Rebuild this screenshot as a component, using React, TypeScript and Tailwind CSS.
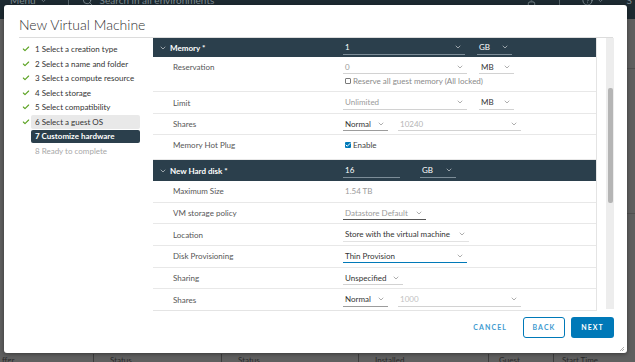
import React from "react";
import { Check, ChevronDown, Search, HelpCircle, User } from "lucide-react";

const steps = [
  { label: "1 Select a creation type", state: "done" },
  { label: "2 Select a name and folder", state: "done" },
  { label: "3 Select a compute resource", state: "done" },
  { label: "4 Select storage", state: "done" },
  { label: "5 Select compatibility", state: "done" },
  { label: "6 Select a guest OS", state: "prev" },
  { label: "7 Customize hardware", state: "active" },
  { label: "8 Ready to complete", state: "todo" },
];

function Select({
  value,
  w,
  text = "text-[#333]",
  line = "border-[#d2d2d2]",
  chev = "text-[#666]",
}: {
  value: string;
  w: string;
  text?: string;
  line?: string;
  chev?: string;
}) {
  return (
    <div className={`flex h-[14px] shrink-0 items-center justify-between border-b pl-[2px] pr-[3px] ${w} ${line}`}>
      <span className={`whitespace-nowrap ${text}`}>{value}</span>
      <ChevronDown size={8} strokeWidth={1.6} className={chev} />
    </div>
  );
}

function Row({ label, h, top = false, children }: { label: string; h: string; top?: boolean; children?: React.ReactNode }) {
  return (
    <div className={`flex shrink-0 border-b border-[#e8e8e8] ${h} ${top ? "items-start pt-[3px]" : "items-center"}`}>
      <div className="flex h-[14px] w-[190px] shrink-0 items-center pl-[20px] text-[#565656]">{label}</div>
      {children}
    </div>
  );
}

function Box({ checked = false }: { checked?: boolean }) {
  return checked ? (
    <span className="flex h-[6px] w-[6px] items-center justify-center rounded-[1px] bg-[#0079b8]">
      <Check size={6} strokeWidth={4} className="text-white" />
    </span>
  ) : (
    <span className="h-[6px] w-[6px] rounded-[1px] border border-[#7a7a7a] bg-white" />
  );
}

export default function App() {
  return (
    <div className="relative h-[362px] w-[635px] overflow-hidden bg-[#5f5f5f] font-[Lato,sans-serif] text-[8px]">
      {/* page behind the dialog */}
      <div className="h-[19px] overflow-hidden bg-[#1d2a31]">
        <div className="-mt-[7px] flex h-[14px] items-center text-[10px] text-[#7d8a91]">
          <span className="ml-[10px] flex items-center gap-[3px]">
            Menu <ChevronDown size={9} />
          </span>
          <span className="ml-[20px] h-[12px] border-l border-[#56636a]" />
          <Search size={11} className="ml-[13px]" />
          <span className="ml-[7px]">Search in all environments</span>
          <span className="ml-auto flex items-center gap-[22px] pr-[3px]">
            <User size={11} />
            <span className="h-[12px] border-l border-[#56636a]" />
            <span className="flex items-center gap-[3px]">
              <HelpCircle size={11} /> <ChevronDown size={9} />
            </span>
            <span>S</span>
          </span>
        </div>
      </div>
      <div className="flex h-[334px] flex-col">
        <div className="ml-auto h-[50px] w-[8px] border-b border-[#505050]" />
        <div className="ml-auto h-[145px] w-[8px] border-b border-[#505050]" />
      </div>
      <div className="flex h-[10px] items-start pt-[1px] text-[8px] text-[#2a2a2a]">
        <span className="w-[93px] pl-[2px]">ffgr.</span>
        <span className="w-[128px] border-l border-[#3d3d3d] pl-[16px]">Status</span>
        <span className="w-[137px] border-l border-[#3d3d3d] pl-[16px]">Status</span>
        <span className="w-[130px] border-l border-[#3d3d3d] pl-[16px]">Installed</span>
        <span className="w-[65px] border-l border-[#3d3d3d] pl-[10px]">Guest</span>
        <span className="border-l border-[#3d3d3d] pl-[8px]">Start Time</span>
      </div>

      {/* dialog */}
      <div className="absolute left-[4px] top-[5px] flex h-[348px] w-[623px] flex-col rounded-[3px] bg-white shadow-[0_1px_4px_rgba(0,0,0,0.4)]">
        <div className="ml-[15px] mr-[14px] h-[33px] shrink-0 border-b border-[#dcdcdc] pt-[11px] text-[14px] font-light leading-[17px] text-[#313131]">
          New Virtual Machine
        </div>

        <div className="flex h-[273px] shrink-0">
          <div className="ml-[15px] w-[134px] shrink-0 pt-[4px]">
            {steps.map((s) => (
              <div key={s.label} className="flex h-[14.5px] items-center">
                <div className="flex w-[12px] shrink-0 justify-end pr-[1px]">
                  {s.state === "done" || s.state === "prev" ? (
                    <Check size={8} strokeWidth={3.2} className="text-[#5aa220]" />
                  ) : null}
                </div>
                <div
                  className={`flex h-[13.5px] w-[109px] items-center rounded-[2px] pl-[4px] ${
                    s.state === "active"
                      ? "bg-[#2b3f4c] font-bold text-white"
                      : s.state === "prev"
                      ? "bg-[#e9e9e9] text-[#333]"
                      : s.state === "todo"
                      ? "text-[#a8a8a8]"
                      : "text-[#333]"
                  }`}
                >
                  {s.label}
                </div>
              </div>
            ))}
          </div>

          <div className="flex w-[444px] shrink-0 flex-col overflow-hidden border-r border-b border-[#e4e4e4]">
            <div className="flex h-[19px] shrink-0 items-center bg-[#2b3f4c] text-white">
              <div className="flex w-[190px] shrink-0 items-center gap-[3px] pl-[6px] font-bold">
                <ChevronDown size={8} strokeWidth={1.6} /> Memory *
              </div>
              <Select value="1" w="w-[122px]" text="text-white" line="border-[#7d8d98]" chev="text-white" />
              <div className="w-[12px]" />
              <Select value="GB" w="w-[35px]" text="text-white" line="border-[#7d8d98]" chev="text-white" />
            </div>

            <Row label="Reservation" h="h-[35px]" top>
              <div className="flex flex-col">
                <div className="flex gap-[12px]">
                  <Select value="0" w="w-[124px]" text="text-[#9a9a9a]" />
                  <Select value="MB" w="w-[35px]" />
                </div>
                <div className="mt-[2px] flex h-[10px] items-center gap-[2px] pl-[2px] text-[#8a8a8a]">
                  <Box /> Reserve all guest memory (All locked)
                </div>
              </div>
            </Row>
            <Row label="Limit" h="h-[22px]">
              <div className="flex gap-[12px]">
                <Select value="Unlimited" w="w-[124px]" text="text-[#9a9a9a]" />
                <Select value="MB" w="w-[35px]" />
              </div>
            </Row>
            <Row label="Shares" h="h-[21px]">
              <div className="flex gap-[10px]">
                <Select value="Normal" w="w-[45px]" line="border-[#9c9c9c]" />
                <Select value="10240" w="w-[123px]" text="text-[#b5b5b5]" />
              </div>
            </Row>
            <Row label="Memory Hot Plug" h="h-[25px]" top>
              <div className="flex h-[14px] items-center gap-[2px] pl-[2px] text-[#444]">
                <Box checked /> Enable
              </div>
            </Row>

            <div className="flex h-[21px] shrink-0 items-center bg-[#2b3f4c] text-white">
              <div className="flex w-[190px] shrink-0 items-center gap-[3px] pl-[6px] font-bold">
                <ChevronDown size={8} strokeWidth={1.6} /> New Hard disk *
              </div>
              <div className="flex h-[14px] w-[57px] shrink-0 items-center border-b border-[#7d8d98] pl-[2px]">16</div>
              <div className="w-[20px]" />
              <Select value="GB" w="w-[36px]" text="text-white" line="border-[#7d8d98]" chev="text-white" />
            </div>
            <Row label="Maximum Size" h="h-[21.7px]">
              <span className="pl-[2px] text-[#9a9a9a]">1.54 TB</span>
            </Row>
            <Row label="VM storage policy" h="h-[21.7px]">
              <Select value="Datastore Default" w="w-[83px]" text="text-[#9a9a9a]" line="border-[#555]" />
            </Row>
            <Row label="Location" h="h-[21.7px]">
              <Select value="Store with the virtual machine" w="w-[126px]" line="border-[#e2e2e2]" />
            </Row>
            <Row label="Disk Provisioning" h="h-[21.7px]">
              <Select value="Thin Provision" w="w-[124px]" line="border-[#0079b8]" />
            </Row>
            <Row label="Sharing" h="h-[21.7px]">
              <Select value="Unspecified" w="w-[60px]" />
            </Row>
            <Row label="Shares" h="h-[21.7px]">
              <div className="flex gap-[10px]">
                <Select value="Normal" w="w-[45px]" line="border-[#9c9c9c]" />
                <Select value="1000" w="w-[123px]" text="text-[#c2c2c2]" />
              </div>
            </Row>
          </div>

          <div className="ml-[9px] h-[271px] w-[8px] shrink-0 bg-[#ededed] pt-[50px]">
            <div className="ml-[2px] h-[115px] w-[5px] rounded-[2px] bg-[#b5b5b5]" />
          </div>
        </div>

        <div className="mr-[13px] mt-[6px] flex h-[21px] justify-end gap-[6px] text-[7px] font-bold tracking-[1.1px]">
          <button className="h-[21px] px-[10px] text-[#3e9ad0]">CANCEL</button>
          <button className="h-[21px] w-[42px] rounded-[3px] border border-[#0079b8] text-[#3e9ad0]">BACK</button>
          <button className="h-[21px] w-[43px] rounded-[3px] bg-[#0079b8] text-white">NEXT</button>
        </div>

        <svg className="absolute bottom-[2px] right-[3px]" width="5" height="5" viewBox="0 0 5 5">
          <path d="M1 5 L5 1 M3 5 L5 3" stroke="#9a9a9a" strokeWidth="0.8" />
        </svg>
      </div>
    </div>
  );
}
